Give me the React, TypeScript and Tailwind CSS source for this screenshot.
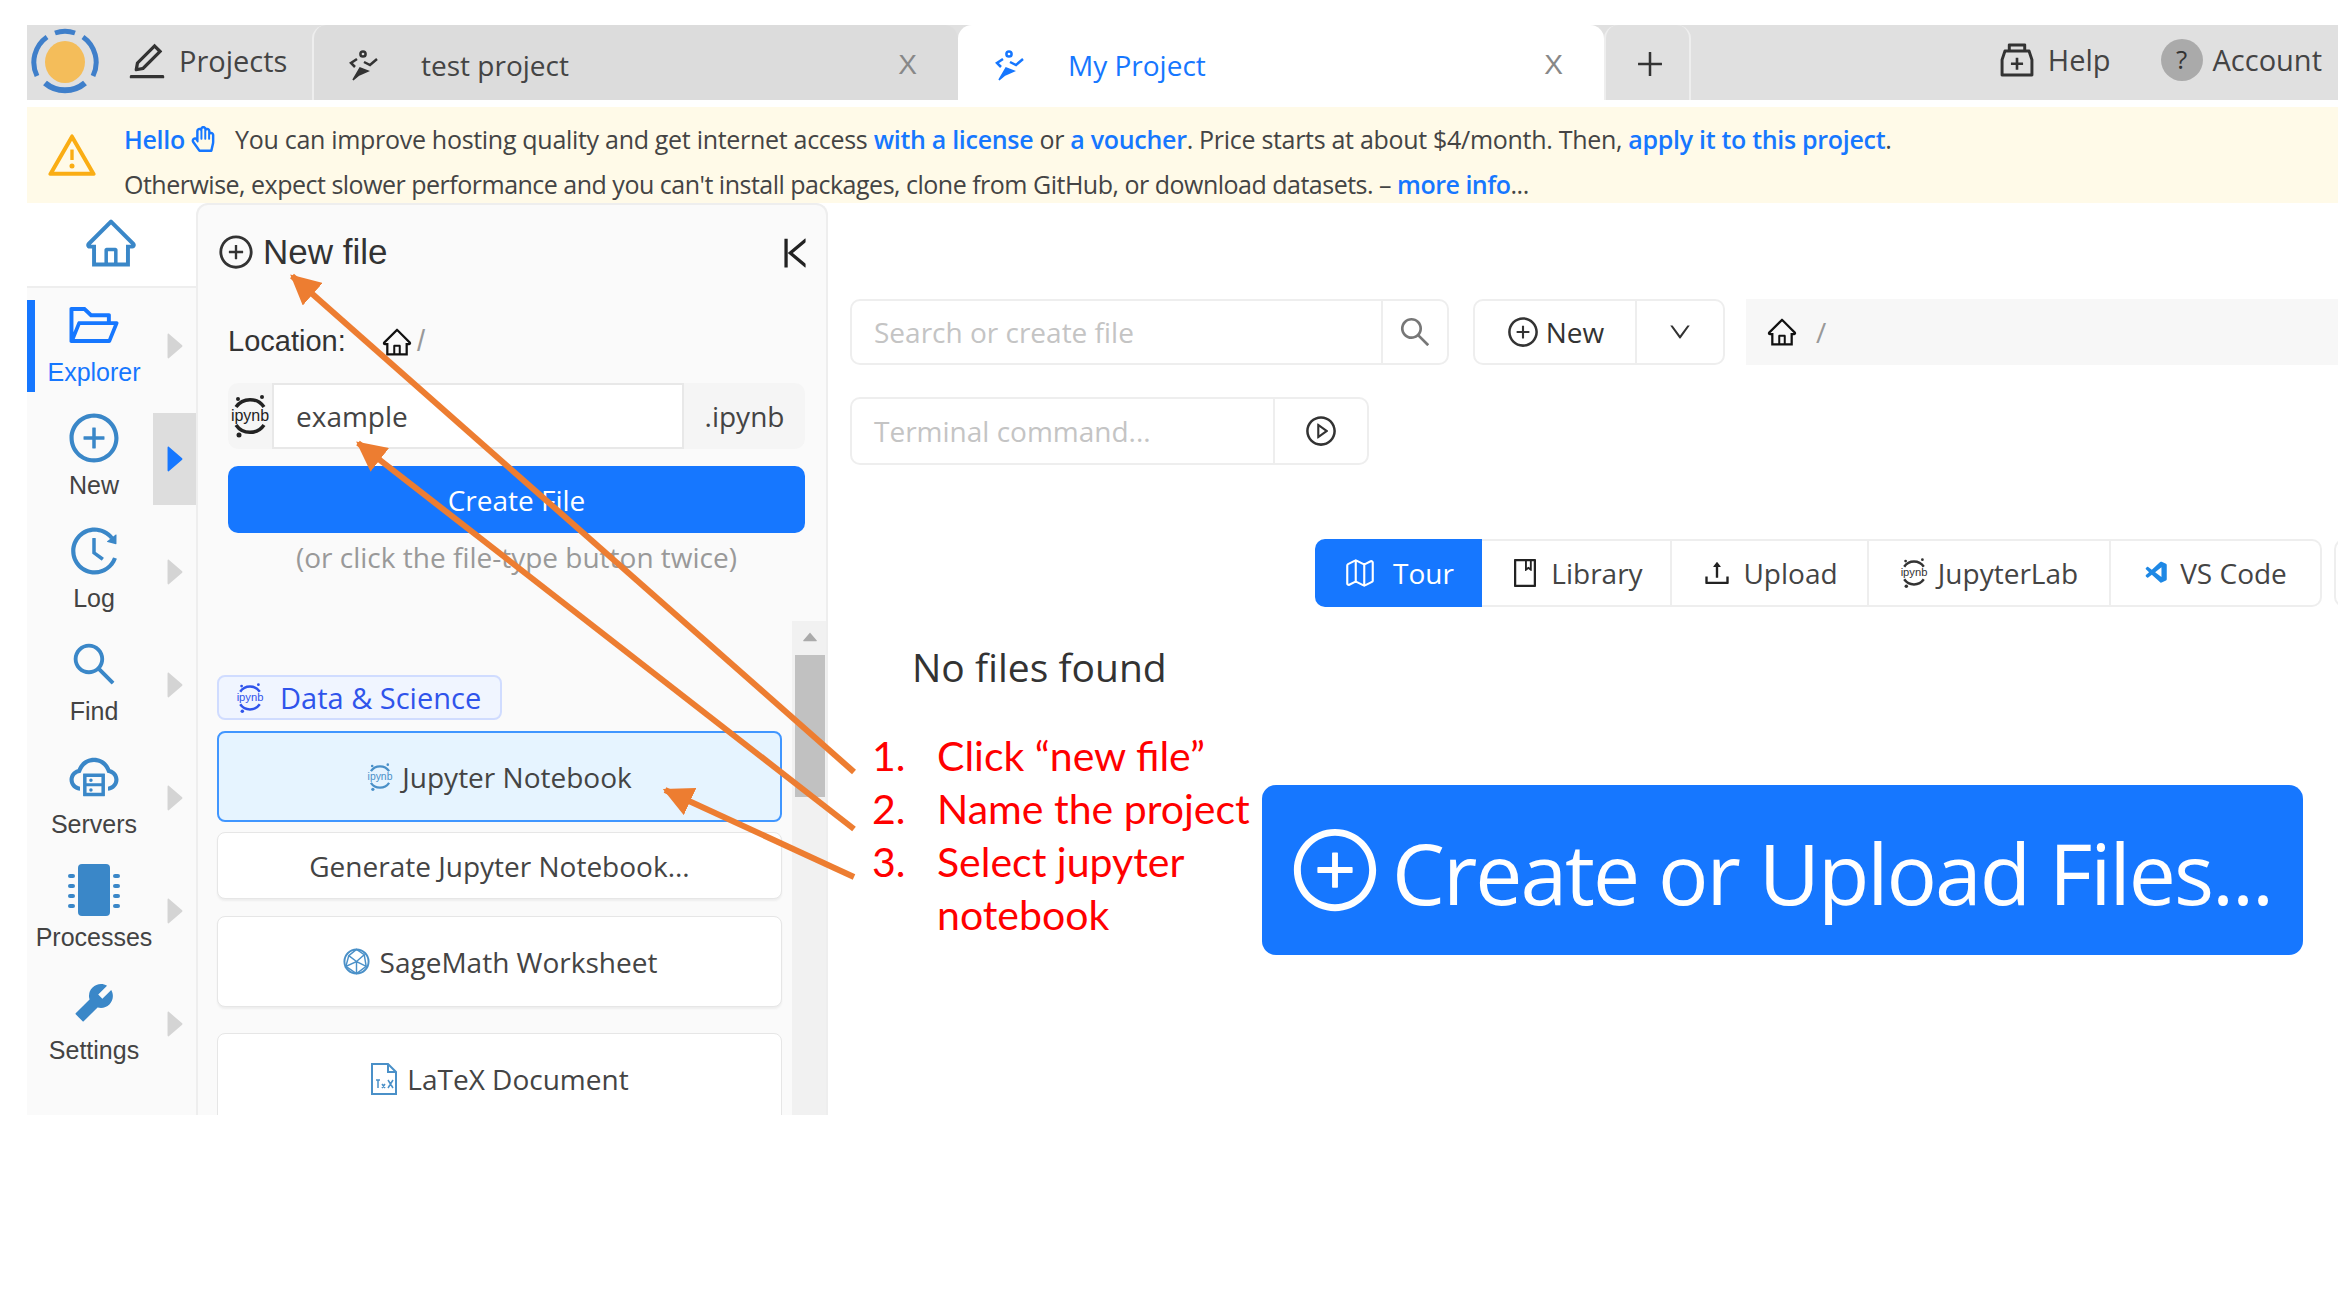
import { ReactNode } from "react"
import { FaRegHandPaper } from "react-icons/fa"
import { VscVscode } from "react-icons/vsc"
import {
    AiOutlineBook,
    AiOutlineCloudServer,
    AiOutlineDown,
    AiOutlineEdit,
    AiOutlineFolderOpen,
    AiOutlineHistory,
    AiOutlineHome,
    AiOutlineMedicineBox,
    AiOutlinePlayCircle,
    AiOutlinePlus,
    AiOutlinePlusCircle,
    AiOutlineSearch,
    AiOutlineUpload,
    AiOutlineVerticalRight,
    AiOutlineWarning,
    AiFillCaretRight,
    AiFillCaretUp,
    AiFillTool,
} from "react-icons/ai"
import { Map } from "lucide-react"

const Logo = () => (
    <svg viewBox="0 0 68 68" className="w-[68px] h-[68px] ml-[4px]" fill="none">
        <ellipse cx="34" cy="34" rx="20" ry="21" fill="#f4bd5a" />
        <path d="M24 5 A31 31 0 0 1 44 5" stroke="#3f7fca" strokeWidth="5" />
        <path d="M52 9 A31 31 0 0 1 62 48" stroke="#3f7fca" strokeWidth="5" />
        <path d="M6 48 A31 31 0 0 1 16 9" stroke="#3f7fca" strokeWidth="5" />
        <path d="M14 55 A31 31 0 0 0 54 55" stroke="#3f7fca" strokeWidth="6" />
    </svg>
)

const RunnerIcon = ({ color }: { color: string }) => (
    <svg viewBox="0 0 30 32" className="w-[30px] h-[32px]" fill="none" stroke={color} strokeWidth="2.5">
        <circle cx="15" cy="5" r="2.6" />
        <path d="M9 10 L3 14 L7 18" />
        <path d="M16 13 L22 16 L29 10" />
        <path d="M12 19 L20 22 L11 26 L5 31 Z" fill={color} strokeWidth="1.5" />
    </svg>
)

const JupyterIcon = ({ className, color = "#222" }: { className: string; color?: string }) => (
    <svg viewBox="0 0 40 44" className={className} fill="none">
        <path d="M6 13 A17 17 0 0 1 34 13" stroke={color} strokeWidth="3.5" />
        <path d="M6 31 A17 17 0 0 0 34 31" stroke={color} strokeWidth="3.5" />
        <circle cx="8" cy="5" r="2" fill={color} />
        <circle cx="32" cy="3" r="2" fill={color} />
        <circle cx="9" cy="41" r="2.5" fill={color} />
        <text x="20" y="27" textAnchor="middle" fontSize="16" fill={color} fontFamily="Liberation Sans, sans-serif">ipynb</text>
    </svg>
)

const SageIcon = () => (
    <svg viewBox="0 0 30 30" className="w-[29px] h-[29px]" fill="none" stroke="#4a90c8" strokeWidth="2">
        <circle cx="15" cy="15" r="12.5" />
        <path d="M15 2.5 L7 9 L4 20 L15 15 L25 20 L23 8 Z M15 15 L7 9 M15 15 L23 8 M15 15 L15 27.5 M4 20 L15 27.5 L25 20" strokeWidth="1.5" />
    </svg>
)

const LatexIcon = () => (
    <svg viewBox="0 0 28 34" className="w-[28px] h-[34px]" fill="none" stroke="#4a90c8" strokeWidth="2">
        <path d="M2 2 H18 L26 10 V32 H2 Z M18 2 V10 H26" />
        <path d="M6 18 H10 M8 18 V26 M12 22 L15 26 M15 22 L12 26 M18 18 L23 26 M23 18 L18 26" strokeWidth="1.5" />
    </svg>
)

const ChipIcon = () => (
    <svg viewBox="0 0 52 52" className="w-[52px] h-[52px]" fill="#3a87c8">
        <rect x="10" y="0" width="32" height="52" rx="4" />
        {[10, 20, 30, 40].map((y) => (
            <g key={y}>
                <rect x="0" y={y} width="7" height="4" rx="2" />
                <rect x="45" y={y} width="7" height="4" rx="2" />
            </g>
        ))}
    </svg>
)

const sideItems: { label: string; icon: ReactNode; active?: boolean; open?: boolean }[] = [
    { label: "Explorer", icon: <AiOutlineFolderOpen className="w-[56px] h-[56px] text-[#1677ff]" />, active: true },
    { label: "New", icon: <AiOutlinePlusCircle className="w-[56px] h-[56px] text-[#3a87c8]" />, open: true },
    { label: "Log", icon: <AiOutlineHistory className="w-[56px] h-[56px] text-[#3a87c8]" /> },
    { label: "Find", icon: <AiOutlineSearch className="w-[52px] h-[52px] text-[#3a87c8]" /> },
    { label: "Servers", icon: <AiOutlineCloudServer className="w-[56px] h-[56px] text-[#3a87c8]" /> },
    { label: "Processes", icon: <ChipIcon /> },
    { label: "Settings", icon: <AiFillTool className="w-[50px] h-[50px] text-[#3a87c8]" /> },
]

const Sidebar = () => (
    <div className="w-[169px] shrink-0 bg-[#fafafa] flex flex-col font-['Liberation_Sans',sans-serif]">
        <div className="h-[85px] bg-white border-b-2 border-[#eeeeee] flex items-center pl-[56px] pb-[4px]">
            <AiOutlineHome className="w-[56px] h-[56px] text-[#3a87c8]" />
        </div>
        <div className="flex flex-col gap-[21px] pt-[12px]">
            {sideItems.map((item) => (
                <div key={item.label} className="flex h-[92px]">
                    <div className={item.active ? "w-[8px] bg-[#1677ff]" : "w-[8px]"} />
                    <div className={`w-[118px] h-[92px] -mt-[5px] self-start flex flex-col items-center justify-between ${item.active ? "text-[#1677ff]" : "text-[#434343]"}`}>
                        <div className="h-[60px] flex items-center">{item.icon}</div>
                        <span className="text-[25px] leading-[30px]">{item.label}</span>
                    </div>
                    <div className={`w-[43px] flex items-center justify-center ${item.open ? "bg-[#dddddd]" : ""}`}>
                        <AiFillCaretRight className={`w-[36px] h-[36px] ${item.open ? "text-[#1677ff]" : "text-[#d4d4d4]"}`} />
                    </div>
                </div>
            ))}
        </div>
    </div>
)

const cards: { box: string; icon?: ReactNode; label: string }[] = [
    { box: "h-[91px] mt-[11px] border-2 border-[#4096ff] bg-[#e6f4ff]", icon: <JupyterIcon className="w-[26px] h-[30px]" color="#4a90c8" />, label: "Jupyter Notebook" },
    { box: "h-[67px] mt-[10px] border border-[#e6e6e6] bg-white shadow-[0_2px_2px_#eeeeee]", label: "Generate Jupyter Notebook..." },
    { box: "h-[91px] mt-[17px] border border-[#e6e6e6] bg-white shadow-[0_2px_2px_#eeeeee]", icon: <SageIcon />, label: "SageMath Worksheet" },
    { box: "h-[91px] mt-[26px] border border-[#e6e6e6] bg-white", icon: <LatexIcon />, label: "LaTeX Document" },
]

const NewFilePanel = () => (
    <div className="w-[632px] shrink-0 relative bg-[#fafafa] border-x-2 border-t-2 border-[#eeeeee] rounded-t-[12px] overflow-hidden">
        <div className="h-[96px] flex items-center justify-between pl-[19px] pr-[10px]">
            <div className="flex items-center gap-[8px] text-[#333] font-['Liberation_Sans',sans-serif] text-[35px] -mt-[2px]">
                <AiOutlinePlusCircle className="w-[38px] h-[38px]" />
                <span>New file</span>
            </div>
            <AiOutlineVerticalRight className="w-[42px] h-[42px] text-[#222]" />
        </div>
        <div className="pl-[30px] pr-[21px]">
            <div className="h-[40px] mt-[21px] flex items-center text-[29px] text-[#333] font-['Liberation_Sans',sans-serif]">
                <span className="w-[153px]">Location:</span>
                <AiOutlineHome className="w-[32px] h-[32px] text-[#111]" />
                <span className="text-[#999] ml-[4px]">/</span>
            </div>
            <div className="mt-[21px] h-[66px] flex bg-[#f5f5f5] rounded-[10px]">
                <div className="w-[44px] flex items-center justify-center">
                    <JupyterIcon className="w-[40px] h-[46px]" color="#222" />
                </div>
                <div className="w-[412px] bg-white border-2 border-[#e8e8e8] flex items-center pl-[22px] text-[28px] text-[#444]">example</div>
                <div className="flex-1 flex items-center justify-center text-[28px] text-[#444]">.ipynb</div>
            </div>
            <div className="mt-[17px] h-[67px] bg-[#1677ff] rounded-[10px] flex items-center justify-center text-white text-[28px]">Create File</div>
            <div className="mt-[4px] text-center text-[#999] text-[28px] leading-[40px]">(or click the file-type button twice)</div>
        </div>
        <div className="absolute left-[594px] top-[416px] w-[36px] bottom-0 bg-[#f1f1f1] flex flex-col items-center">
            <AiFillCaretUp className="w-[20px] h-[20px] mt-[6px] text-[#aaaaaa]" />
            <div className="mt-[8px] w-[30px] h-[142px] bg-[#c1c1c1]" />
        </div>
        <div className="pl-[19px] w-[584px] mt-[98px]">
            <div className="w-[285px] h-[45px] bg-[#f0f5ff] border-2 border-[#d0dcff] rounded-[8px] flex items-center pl-[17px] gap-[16px] text-[#2f54eb] text-[29px]">
                <JupyterIcon className="w-[28px] h-[34px]" color="#2f54eb" />
                <span>Data &amp; Science</span>
            </div>
            {cards.map((card) => (
                <div key={card.label} className={`${card.box} rounded-[8px] flex items-center justify-center gap-[9px] text-[#444] text-[28px] shrink-0`}>
                    {card.icon}
                    <span>{card.label}</span>
                </div>
            ))}
        </div>
    </div>
)

const actionTabs: { label: string; icon: ReactNode; w: string }[] = [
    { label: "Library", icon: <AiOutlineBook className="w-[32px] h-[36px] text-[#222]" />, w: "w-[190px]" },
    { label: "Upload", icon: <AiOutlineUpload className="w-[32px] h-[34px] text-[#222]" />, w: "w-[197px]" },
    { label: "JupyterLab", icon: <JupyterIcon className="w-[28px] h-[34px]" color="#333" />, w: "w-[242px]" },
    { label: "VS Code", icon: <VscVscode className="w-[26px] h-[30px] text-[#1e88e5]" />, w: "w-[211px]" },
]

const Files = () => (
    <div className="flex-1 pl-[22px] pt-[96px] min-w-0">
        <div className="flex h-[66px]">
            <div className="w-[599px] shrink-0 flex bg-white border-2 border-[#eeeeee] rounded-[10px] overflow-hidden">
                <div className="flex-1 flex items-center pl-[22px] text-[#c4c4c4] text-[28px]">Search or create file</div>
                <div className="w-[66px] border-l-2 border-[#eeeeee] flex items-center justify-center">
                    <AiOutlineSearch className="w-[36px] h-[36px] text-[#777]" />
                </div>
            </div>
            <div className="ml-[24px] w-[252px] shrink-0 flex border-2 border-[#eeeeee] rounded-[10px] overflow-hidden">
                <div className="w-[160px] flex items-center justify-center gap-[6px] text-[28px] text-[#333]">
                    <AiOutlinePlusCircle className="w-[34px] h-[34px]" />
                    <span>New</span>
                </div>
                <div className="flex-1 border-l-2 border-[#eeeeee] flex items-center justify-center">
                    <AiOutlineDown className="w-[26px] h-[26px] text-[#333]" />
                </div>
            </div>
            <div className="ml-[21px] w-[620px] shrink-0 bg-[#f7f7f7] flex items-center pl-[20px] gap-[18px] text-[#999] text-[28px]">
                <AiOutlineHome className="w-[32px] h-[32px] text-[#111]" />
                <span>/</span>
            </div>
        </div>
        <div className="mt-[32px] w-[519px] h-[68px] flex border-2 border-[#eeeeee] rounded-[10px] overflow-hidden">
            <div className="flex-1 flex items-center pl-[22px] text-[#c4c4c4] text-[28px]">Terminal command...</div>
            <div className="w-[94px] border-l-2 border-[#eeeeee] flex items-center justify-center">
                <AiOutlinePlayCircle className="w-[34px] h-[34px] text-[#333]" />
            </div>
        </div>
        <div className="mt-[74px] ml-[465px] flex w-[1023px]">
            <div className="w-[167px] shrink-0 h-[68px] bg-[#1677ff] rounded-l-[10px] flex items-center justify-center gap-[16px] text-white text-[28px]">
                <Map className="w-[34px] h-[34px]" strokeWidth={1.5} />
                <span>Tour</span>
            </div>
            {actionTabs.map((tab, i) => (
                <div key={tab.label} className={`${tab.w} shrink-0 h-[68px] border-y-2 border-r-2 border-[#eeeeee] flex items-center justify-center gap-[10px] text-[#444] text-[28px] ${i === 3 ? "rounded-r-[10px]" : ""}`}>
                    {tab.icon}
                    <span>{tab.label}</span>
                </div>
            ))}
            <div className="ml-[12px] w-[10px] shrink-0 h-[68px] border-y-2 border-l-2 border-[#eeeeee] rounded-l-[10px]" />
        </div>
        <div className="mt-[34px] ml-[62px] text-[39px] leading-[52px] text-[#333]">No files found</div>
    </div>
)

export default function App() {
    return (
        <div className="relative w-[2338px] h-[1315px] overflow-hidden bg-white pt-[25px] pl-[27px] font-['Open_Sans',sans-serif]">
            {/* tab bar */}
            <div className="h-[75px] bg-[#e0e0e0] flex items-stretch">
                <div className="w-[285px] flex items-start pt-[3px]">
                    <Logo />
                    <div className="flex items-center gap-[10px] ml-[26px] mt-[11px] text-[29px] text-[#444]">
                        <AiOutlineEdit className="w-[44px] h-[44px] text-[#333]" />
                        <span>Projects</span>
                    </div>
                </div>
                <div className="w-[646px] bg-[#dcdcdc] border-l-2 border-[#eeeeee] rounded-t-[14px] flex items-center pl-[34px] pr-[41px] pt-[4px] text-[28px] text-[#444]">
                    <RunnerIcon color="#333333" />
                    <span className="ml-[43px] flex-1">test project</span>
                    <span className="text-[#888] font-['Liberation_Sans',sans-serif]">X</span>
                </div>
                <div className="w-[646px] bg-white rounded-t-[14px] flex items-center pl-[36px] pr-[41px] pt-[4px] text-[28px] text-[#1677ff]">
                    <RunnerIcon color="#1677ff" />
                    <span className="ml-[44px] flex-1">My Project</span>
                    <span className="text-[#888] font-['Liberation_Sans',sans-serif]">X</span>
                </div>
                <div className="w-[87px] border-x-2 border-[#eeeeee] rounded-t-[14px] flex items-center justify-center pl-[4px] pt-[3px]">
                    <AiOutlinePlus className="w-[34px] h-[34px] text-[#333]" />
                </div>
                <div className="flex-1 flex items-center justify-end pr-[16px] pb-[6px] text-[29px] text-[#444]">
                    <AiOutlineMedicineBox className="w-[42px] h-[42px] text-[#333]" />
                    <span className="ml-[10px]">Help</span>
                    <span className="ml-[50px] w-[42px] h-[42px] rounded-full bg-[#aaaaaa] flex items-center justify-center text-[#333] text-[26px]">?</span>
                    <span className="ml-[10px]">Account</span>
                </div>
            </div>

            {/* license banner */}
            <div className="mt-[7px] h-[96px] bg-[#fffae8] flex items-center text-[25px] text-[#444]">
                <AiOutlineWarning className="w-[54px] h-[54px] ml-[18px] text-[#faad14]" />
                <div className="ml-[25px] flex flex-col gap-[9px] pt-[12px]">
                    <div className="leading-[36px] flex items-center whitespace-pre tracking-[-0.3px]">
                        <span className="font-semibold text-[#1677ff]">Hello </span>
                        <FaRegHandPaper className="w-[24px] h-[26px] text-[#1677ff] mr-[20px]" />
                        <span>You can improve hosting quality and get internet access <b className="font-semibold text-[#1677ff]">with a license</b> or <b className="font-semibold text-[#1677ff]">a voucher</b>. Price starts at about $4/month. Then, <b className="font-semibold text-[#1677ff]">apply it to this project</b>.</span>
                    </div>
                    <div className="leading-[36px] whitespace-pre tracking-[-0.5px]">Otherwise, expect slower performance and you can't install packages, clone from GitHub, or download datasets. – <b className="font-semibold text-[#1677ff]">more info</b>...</div>
                </div>
            </div>

            <div className="flex h-[912px] overflow-hidden">
                <Sidebar />
                <NewFilePanel />
                <Files />
            </div>

            {/* tutorial annotations */}
            <svg className="absolute inset-0 w-full h-full pointer-events-none" fill="none">
                <defs>
                    <marker id="head" markerWidth="5" markerHeight="5" refX="4.6" refY="2.5" orient="auto">
                        <path d="M0 0 L5 2.5 L0 5 Z" fill="#ed7d31" />
                    </marker>
                </defs>
                <path d="M854 772 L292 276" stroke="#ed7d31" strokeWidth="6" markerEnd="url(#head)" />
                <path d="M854 829 L358 443" stroke="#ed7d31" strokeWidth="6" markerEnd="url(#head)" />
                <path d="M854 877 L665 790" stroke="#ed7d31" strokeWidth="6" markerEnd="url(#head)" />
            </svg>
            <div className="absolute left-[872px] top-[729px] font-['Lato',sans-serif] text-[#ff0000] text-[41px] leading-[53px]">
                {[["1.", "Click “new file”"], ["2.", "Name the project"], ["3.", "Select jupyter"], ["", "notebook"]].map(([n, t]) => (
                    <div key={t} className="flex">
                        <span className="w-[65px]">{n}</span>
                        <span>{t}</span>
                    </div>
                ))}
            </div>
            <div className="absolute left-[1262px] top-[785px] w-[1041px] h-[170px] bg-[#1677ff] rounded-[14px] flex items-center pl-[26px] gap-[10px] text-white text-[84px] tracking-[-2px]">
                <AiOutlinePlusCircle className="w-[94px] h-[94px]" />
                <span className="mt-[5px]">Create or Upload Files...</span>
            </div>
        </div>
    )
}
